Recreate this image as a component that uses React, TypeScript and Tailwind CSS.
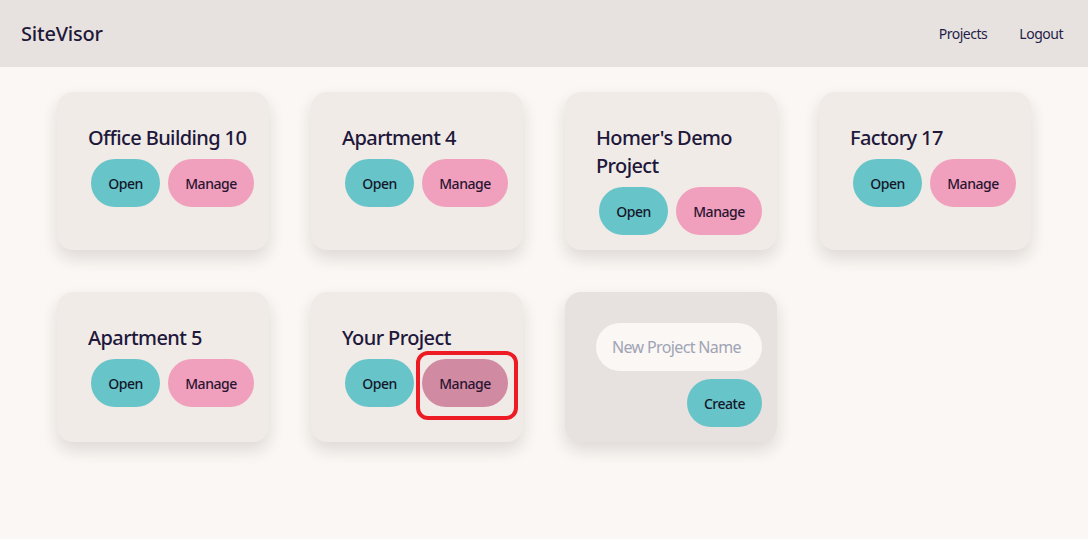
import { useState } from "react";

const projects = [
  "Office Building 10",
  "Apartment 4",
  "Homer's Demo Project",
  "Factory 17",
  "Apartment 5",
  "Your Project",
];

function ProjectCard({ name, marked }: { name: string; marked?: boolean }) {
  return (
    <div className="flex flex-col rounded-2xl bg-[#f0ebe7] pt-8 pb-[15px] pl-[31px] pr-[15px] shadow-[0_8px_16px_rgba(60,40,30,0.14)]">
      <h2 className="text-[20px] leading-7 font-medium tracking-[-0.03em] text-[#21173a]">{name}</h2>
      <div className="mt-[7px] flex justify-end gap-2">
        <button className="h-12 w-[69px] rounded-full bg-[#67c4c8] text-[14px] font-medium text-[#14162b]">
          Open
        </button>
        <div className="relative">
          <button
            className={
              marked
                ? "h-12 w-[86px] rounded-full bg-[#d08aa2] text-[14px] font-medium text-[#2a1530]"
                : "h-12 w-[86px] rounded-full bg-[#f09fbd] text-[14px] font-medium text-[#2a1530]"
            }
          >
            Manage
          </button>
          {marked && (
            <div className="pointer-events-none absolute top-[-8px] bottom-[-13px] left-[-6px] right-[-10px] rounded-[12px] border-4 border-[#ed1c24]" />
          )}
        </div>
      </div>
    </div>
  );
}

export default function App() {
  const [name, setName] = useState("");

  return (
    <div className="min-h-[539px] bg-[#faf7f4] font-['Noto_Sans',sans-serif] tracking-[-0.03em]">
      <header className="flex h-[67px] items-center justify-between bg-[#e7e2df] pl-[21px] pr-[25px]">
        <span className="text-[20px] font-medium tracking-[-0.01em] text-[#1f1838]">SiteVisor</span>
        <nav className="flex items-center gap-8 text-[14px] text-[#1f1d4a]">
          <a href="#">Projects</a>
          <a href="#">Logout</a>
        </nav>
      </header>

      <main className="grid grid-cols-[repeat(4,212px)] justify-center gap-[42px] pt-[25px]">
        {projects.map((p) => (
          <ProjectCard key={p} name={p} marked={p === "Your Project"} />
        ))}
        <div className="flex flex-col items-end gap-2 rounded-2xl bg-[#e7e2df] pt-[31px] pb-[15px] pl-[31px] pr-[15px] shadow-[0_8px_16px_rgba(60,40,30,0.14)]">
          <input
            value={name}
            onChange={(e) => setName(e.target.value)}
            placeholder="New Project Name"
            className="h-12 w-full rounded-full bg-[#faf7f4] px-4 text-[16px] tracking-[-0.04em] text-[#21173a] outline-none placeholder:text-[#a0a4b4]"
          />
          <button className="h-12 w-[75px] rounded-full bg-[#67c4c8] text-[14px] font-medium text-[#14162b]">
            Create
          </button>
        </div>
      </main>
    </div>
  );
}
